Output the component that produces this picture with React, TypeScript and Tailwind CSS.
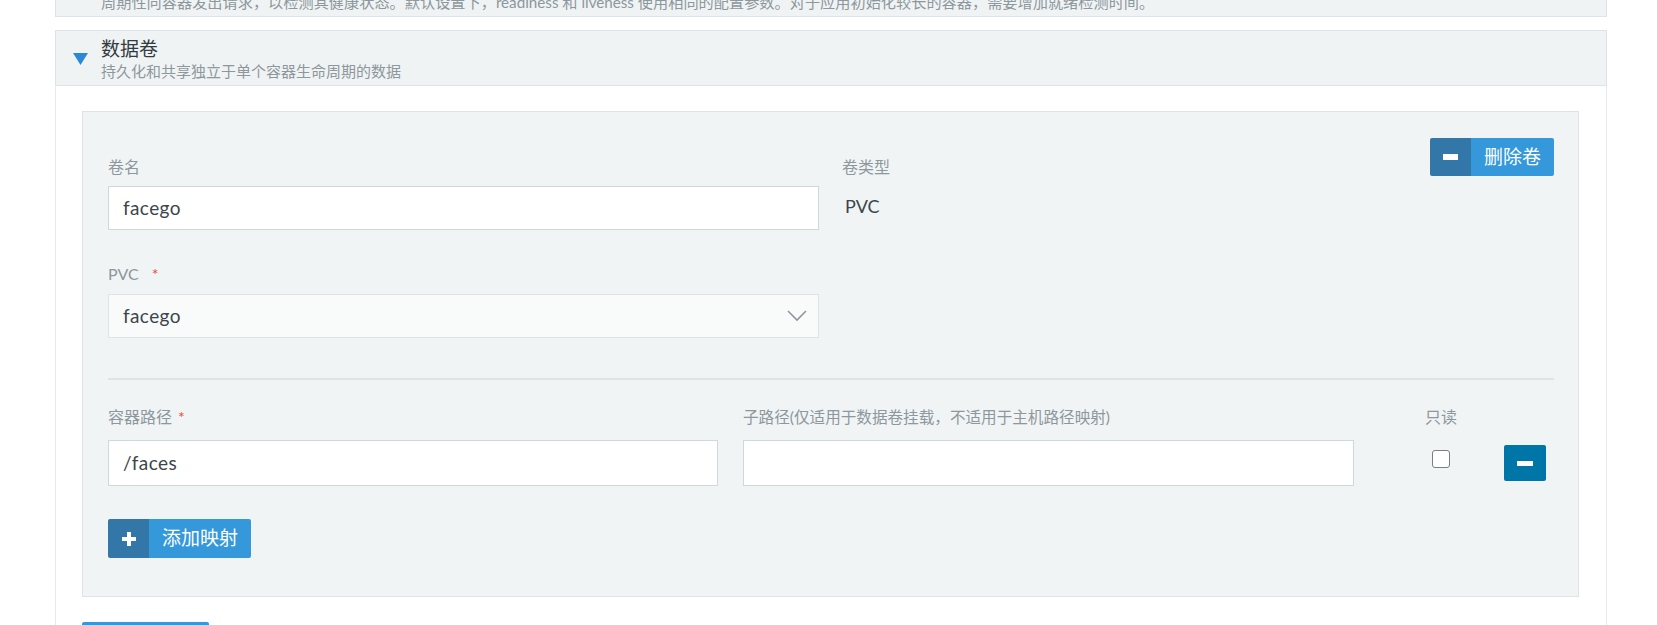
import React from "react";

const font = { fontFamily: 'Lato, "Noto Sans CJK SC", sans-serif' };

function SplitButton({
  icon,
  label,
  className = "",
}: {
  icon: "plus" | "minus";
  label: string;
  className?: string;
}) {
  return (
    <button
      type="button"
      className={[
        "flex items-stretch overflow-hidden rounded-[2px] text-white",
        className,
      ].join(" ")}
    >
      <span className="flex w-[41px] items-center justify-center bg-[#3277a7]">
        {icon === "minus" ? (
          <span className="block h-[6px] w-[15px] bg-white" />
        ) : (
          <svg width="16" height="16" viewBox="0 0 16 16">
            <path d="M6 1h4v5h5v4h-5v5H6v-5H1V6h5z" fill="#fff" />
          </svg>
        )}
      </span>
      <span className="flex flex-1 items-center justify-center bg-[#3498db] text-[19px]">
        {label}
      </span>
    </button>
  );
}

function Label({
  text,
  required,
  size = "text-[16px]",
  gap = "ml-[6px]",
}: {
  text: string;
  required?: boolean;
  size?: string;
  gap?: string;
}) {
  return (
    <div className={["h-5 leading-5 text-[#8d979c]", size].join(" ")}>
      {text}
      {required && <span className={[gap, "text-[#e74c3c]"].join(" ")}>*</span>}
    </div>
  );
}

export default function App() {
  return (
    <div className="min-h-screen overflow-hidden bg-white" style={font}>
      <div className="ml-[55px] w-[1552px]">
        {/* previous section, cut off at the top */}
        <div className="h-[17px] overflow-hidden border-x border-b border-[#dde3e6] bg-[#eff3f4]">
          <div className="-mt-[8px] pl-[45px] text-[15.2px] leading-5 text-[#8d979c]">
            周期性向容器发出请求，以检测其健康状态。默认设置下，readiness 和 liveness 使用相同的配置参数。对于应用初始化较长的容器，需要增加就绪检测时间。
          </div>
        </div>

        {/* 数据卷 header */}
        <div className="mt-[13px] flex h-[56px] items-start border border-[#dde3e6] bg-[#eff3f4]">
          <svg width="15" height="12" viewBox="0 0 15 12" className="ml-[17px] mt-[22px]">
            <path d="M0 0h15L7.5 12z" fill="#2b88d8" />
          </svg>
          <div className="ml-[13px] pt-[6px]">
            <div className="text-[19px] leading-6 text-[#333b3f]">数据卷</div>
            <div className="text-[15px] leading-5 text-[#8d979c]">
              持久化和共享独立于单个容器生命周期的数据
            </div>
          </div>
        </div>

        <div className="border-x border-[#e6eaec] pl-[26px] pr-[27px] pt-[25px]">
          <div className="border border-[#dde3e6] bg-[#f0f4f5] pb-[38px] pl-[25px] pr-[24px] pt-[26px]">
            {/* volume row */}
            <div className="flex items-start">
              <div className="w-[711px] pt-[19px]">
                <Label text="卷名" />
                <div className="mt-[9px] flex h-[44px] items-center border border-[#cfd8dc] bg-white pl-[14px] text-[19px] tracking-[0.4px] text-[#3c4549]">
                  facego
                </div>
                <div className="mt-[34px]">
                  <Label text="PVC" required gap="ml-[13px]" />
                </div>
                <div className="mt-[10px] flex h-[44px] items-center justify-between border border-[#dde3e6] bg-[#f9fbfb] pl-[14px] pr-[11px] text-[19px] tracking-[0.4px] text-[#3c4549]">
                  facego
                  <svg width="20" height="12" viewBox="0 0 20 12">
                    <path d="M1 1l9 9 9-9" fill="none" stroke="#8f989d" strokeWidth="1.6" />
                  </svg>
                </div>
              </div>
              <div className="ml-[23px] flex-1 pt-[19px]">
                <Label text="卷类型" />
                <div className="mt-[17px] pl-[3px] text-[18px] leading-6 text-[#3c4549]">PVC</div>
              </div>
              <SplitButton icon="minus" label="删除卷" className="h-[38px] w-[124px]" />
            </div>

            <div className="mt-[40px] h-[2px] bg-[#dde3e6]" />

            {/* mount row */}
            <div className="mt-[27px] flex items-start">
              <div className="w-[610px]">
                <Label text="容器路径" required />
                <div className="mt-[13px] flex h-[46px] items-center border border-[#cfd8dc] bg-white pl-[14px] text-[19px] tracking-[0.4px] text-[#3c4549]">
                  /faces
                </div>
              </div>
              <div className="ml-[25px] w-[611px]">
                <Label text="子路径(仅适用于数据卷挂载，不适用于主机路径映射)" size="text-[15.6px]" />
                <div className="mt-[13px] h-[46px] border border-[#cfd8dc] bg-white" />
              </div>
              <div className="ml-[71px] w-[40px]">
                <Label text="只读" />
                <div className="ml-[7px] mt-[23px] h-[18px] w-[18px] rounded-[3px] border border-[#7b7f82] bg-white" />
              </div>
              <button
                type="button"
                className="ml-[39px] mt-[38px] flex h-[36px] w-[42px] items-center justify-center rounded-[2px] bg-[#0076a8]"
              >
                <span className="block h-[5px] w-[16px] bg-white" />
              </button>
            </div>

            <SplitButton icon="plus" label="添加映射" className="mt-[33px] h-[39px] w-[143px]" />
          </div>

          <div className="mt-[25px] h-[40px] w-[127px] rounded-[2px] bg-[#3498db]" />
        </div>
      </div>
    </div>
  );
}
